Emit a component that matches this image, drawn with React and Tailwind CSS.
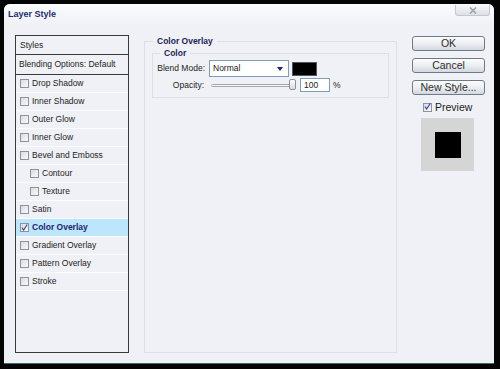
import React from "react";

const font = { fontFamily: '"Liberation Sans", Arial, sans-serif' };

function Check({ checked }) {
  return (
    <span className="w-[9px] h-[9px] shrink-0 border border-[#8d929b] bg-gradient-to-br from-[#d9dce2] to-[#f9fafc] flex items-center justify-center">
      {checked && (
        <svg width="9" height="9" viewBox="0 0 9 9" className="-mt-[1px]">
          <path d="M1.2 4.6 L3.4 7.8 L8 0.6" fill="none" stroke="#2a3596" strokeWidth="1.3" />
        </svg>
      )}
    </span>
  );
}

function Row({ label, indent, active }) {
  return (
    <div
      className={`h-[18px] flex items-center border-b border-[#fbfcfd] ${indent ? "pl-[14px]" : "pl-[4px]"} ${
        active ? "bg-[#bde5fb]" : ""
      }`}
    >
      <Check checked={active} />
      <span
        className={`ml-[3px] text-[8.5px] leading-none ${active ? "font-bold text-[#1b2570]" : "text-[#1c1c1c]"}`}
      >
        {label}
      </span>
    </div>
  );
}

function Btn({ children }) {
  return (
    <div className="w-[73px] h-[15px] rounded-[3px] border border-[#6f7a88] bg-gradient-to-b from-[#fdfdfe] via-[#eceef2] to-[#d3d8df] flex items-center justify-center text-[10.5px] leading-none text-[#2e2e2e]">
      {children}
    </div>
  );
}

export default function App() {
  const items = [
    ["Drop Shadow"],
    ["Inner Shadow"],
    ["Outer Glow"],
    ["Inner Glow"],
    ["Bevel and Emboss"],
    ["Contour", true],
    ["Texture", true],
    ["Satin"],
    ["Color Overlay", false, true],
    ["Gradient Overlay"],
    ["Pattern Overlay"],
    ["Stroke"],
  ];
  return (
    <div className="w-[500px] h-[369px] bg-[#050505] pt-[4px] pl-[4px]" style={font}>
      <div className="w-[490px] h-[360px] bg-[#eff1f6] rounded-t-[6px] border-b border-[#3f6a6a] flex flex-col overflow-hidden">
        {/* title bar */}
        <div className="h-[22px] shrink-0 bg-gradient-to-b from-[#fbfcfe] to-[#eff1f6] flex items-start justify-between pl-[4px] pr-[4px]">
          <span className="mt-[6px] text-[9px] font-bold leading-none text-[#1c2c6c]">Layer Style</span>
          <div className="mt-[1px] w-[35px] h-[11px] rounded-b-[3px] border border-t-0 border-[#c4c8d0] bg-gradient-to-b from-[#f7f8fa] to-[#dde0e6] flex items-center justify-center">
            <svg width="8" height="7" viewBox="0 0 8 7">
              <path d="M1 0.5 L7 6.5 M7 0.5 L1 6.5" stroke="#9ea3ab" strokeWidth="1.6" />
            </svg>
          </div>
        </div>

        {/* body */}
        <div className="flex pl-[11px]">
          {/* left list */}
          <div className="mt-[9px] w-[114px] h-[318px] border border-[#3a3a3a] bg-[#eff1f6] flex flex-col">
            <div className="h-[19px] border-b border-[#3a3a3a] flex items-center pl-[4px] text-[8.5px] leading-none text-[#1c1c1c]">
              Styles
            </div>
            <div className="h-[20px] border-b border-[#3a3a3a] flex items-center pl-[3px] text-[8.5px] leading-none text-[#1c1c1c]">
              Blending Options: Default
            </div>
            {items.map(([l, ind, act]) => (
              <Row key={l} label={l} indent={ind} active={act} />
            ))}
          </div>

          {/* main group */}
          <fieldset className="ml-[15px] mt-[10px] w-[253px] h-[317px] border border-[#dcdfe6] px-[7px] pt-[1px]">
            <legend className="ml-[1px] px-[4px] text-[8.5px] leading-[11px] font-bold text-[#1b2654]">
              Color Overlay
            </legend>
            <fieldset className="border border-[#dcdfe6] pl-[5px] pt-[1px] pb-[5px]">
              <legend className="ml-[2px] px-[4px] text-[8.5px] leading-[11px] font-bold text-[#1b2654]">Color</legend>
              <div className="flex items-center h-[17px]">
                <span className="w-[47px] flex justify-end whitespace-nowrap text-[8.5px] leading-none text-[#1c1c1c]">
                  Blend Mode:
                </span>
                <div className="ml-[4px] w-[80px] h-[17px] border border-[#7f9db9] bg-white flex items-center justify-between pl-[3px] pr-[5px]">
                  <span className="text-[8.5px] leading-none text-[#1c1c1c]">Normal</span>
                  <svg width="6" height="4" viewBox="0 0 6 4">
                    <path d="M0 0 L6 0 L3 4 Z" fill="#1a237a" />
                  </svg>
                </div>
                <div className="ml-[3px] w-[25px] h-[14px] bg-black border border-[#555]" />
              </div>
              <div className="flex items-center h-[14px] mt-[1px]">
                <span className="w-[46px] flex justify-end whitespace-nowrap text-[8.5px] leading-none text-[#1c1c1c]">
                  Opacity:
                </span>
                <div className="ml-[5px] w-[89px] h-[14px] relative flex items-center">
                  <div className="ml-[2px] w-[85px] h-[3px] rounded-full border border-[#a3a8b0] bg-[#f4f5f8]" />
                  <div className="absolute left-[80px] top-[1px] w-[7px] h-[11px] rounded-[2px] border border-[#8d939c] bg-gradient-to-b from-[#fbfbfc] to-[#d9dce1]" />
                </div>
                <div className="ml-[2px] w-[30px] h-[14px] border border-[#7f9db9] bg-white flex items-center pl-[3px] text-[8.5px] leading-none text-[#1c1c1c]">
                  100
                </div>
                <span className="ml-[3px] text-[8.5px] leading-none text-[#1c1c1c]">%</span>
              </div>
            </fieldset>
          </fieldset>

          {/* right column */}
          <div className="ml-[15px] mt-[10px] flex flex-col">
            <Btn>OK</Btn>
            <div className="mt-[7px]">
              <Btn>Cancel</Btn>
            </div>
            <div className="mt-[7px]">
              <Btn>New Style...</Btn>
            </div>
            <div className="mt-[7px] ml-[11px] flex items-center h-[10px]">
              <Check checked />
              <span className="ml-[3px] text-[10.5px] leading-none text-[#1c1c1c]">Preview</span>
            </div>
            <div className="mt-[6px] ml-[9px] w-[53px] h-[53px] bg-[#d5d5d5] flex items-center justify-center">
              <div className="w-[26px] h-[26px] bg-black" />
            </div>
          </div>
        </div>
      </div>
    </div>
  );
}
